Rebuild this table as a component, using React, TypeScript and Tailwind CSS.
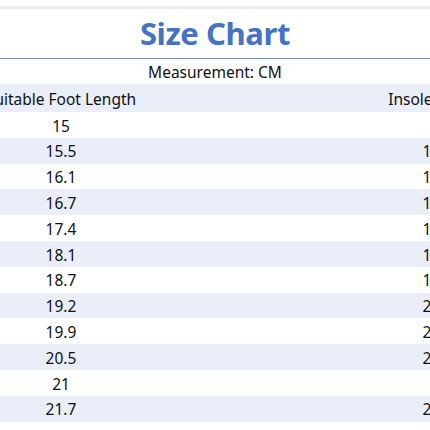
import React from "react";

const rows: [string, string][] = [
  ["15", "16"],
  ["15.5", "16.5"],
  ["16.1", "17.1"],
  ["16.7", "17.7"],
  ["17.4", "18.4"],
  ["18.1", "19.1"],
  ["18.7", "19.7"],
  ["19.2", "20.2"],
  ["19.9", "20.9"],
  ["20.5", "21.5"],
  ["21", "22"],
  ["21.7", "22.7"],
];

export default function App() {
  return (
    <div
      className="w-[430px] h-[430px] overflow-hidden bg-white text-[#111]"
      style={{ fontFamily: '"Noto Sans", "Open Sans", sans-serif' }}
    >
      <div className="h-[6px]" />
      <div className="h-[3px] bg-[#ececec]" />
      <div className="h-[50px] flex items-center justify-center border-b border-[#6f8fcf]">
        <span className="text-[31px] font-bold text-[#4472c4] leading-none tracking-[-0.4px]">
          Size Chart
        </span>
      </div>
      <div className="h-[25px] pt-[2px] flex items-center justify-center text-[15.5px] leading-none">
        Measurement: CM
      </div>
      <div className="w-[560px] flex flex-col">
        <div className="h-[28px] pt-[3px] flex items-center bg-[#e9eef8] text-[15.5px] leading-none">
          <div className="w-[122px] whitespace-nowrap flex justify-center">
            <span>Suitable Foot Length</span>
          </div>
          <div className="w-[256px]" />
          <div className="w-[120px] whitespace-nowrap flex justify-center">
            <span>Insole Length</span>
          </div>
        </div>
        {rows.map(([a, b], i) => (
          <div
            key={i}
            className={`h-[25.8px] pt-[3px] flex items-center text-[15.5px] leading-none ${
              i % 2 === 1 ? "bg-[#e9eef8]" : "bg-white"
            }`}
          >
            <div className="w-[122px] text-center">{a}</div>
            <div className="w-[256px]" />
            <div className="w-[120px] text-center">{b}</div>
          </div>
        ))}
      </div>
    </div>
  );
}
